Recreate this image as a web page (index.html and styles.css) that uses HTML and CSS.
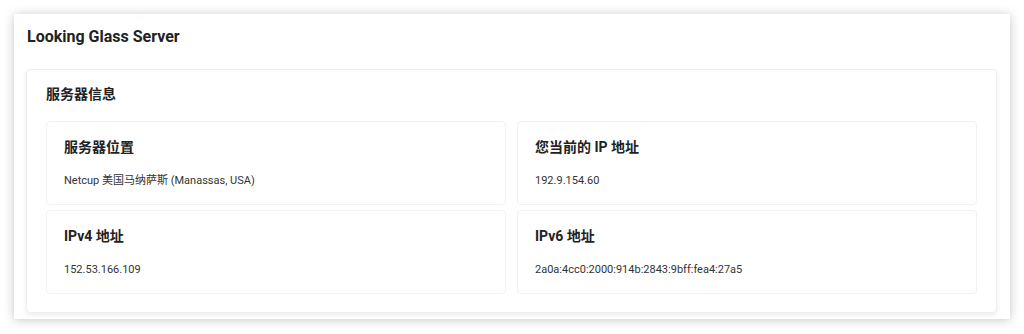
FILE: index.html
```html
<!DOCTYPE html>
<html lang="zh-CN">
<head>
  <meta charset="UTF-8">
  <meta name="viewport" content="width=device-width, initial-scale=1.0">
  <title>Looking Glass Server</title>
  <link rel="stylesheet" href="styles.css">
</head>
<body>
  <div class="window">
    <div class="header">Looking Glass Server</div>
    <div class="panel">
      <div class="panel-title">服务器信息</div>
      <div class="info-grid">
        <div class="info-card">
          <div class="info-label">服务器位置</div>
          <div class="info-value">Netcup 美国马纳萨斯 (Manassas, USA)</div>
        </div>
        <div class="info-card">
          <div class="info-label">您当前的 IP 地址</div>
          <div class="info-value">192.9.154.60</div>
        </div>
        <div class="info-card">
          <div class="info-label">IPv4 地址</div>
          <div class="info-value">152.53.166.109</div>
        </div>
        <div class="info-card">
          <div class="info-label">IPv6 地址</div>
          <div class="info-value">2a0a:4cc0:2000:914b:2843:9bff:fea4:27a5</div>
        </div>
      </div>
    </div>
  </div>
</body>
</html>
```

FILE: styles.css
```css
body {
  font-family: Roboto, "Noto Sans CJK SC", sans-serif;
  background-color: #ffffff;
  color: #222222;
  margin: 0;
  padding: 14px;
}
.window {
  width: 996px;
  height: 305px;
  box-sizing: border-box;
  background-color: #ffffff;
  padding: 12px 13px 0 12px;
  box-shadow: 0 1px 10px rgba(0, 0, 0, 0.22);
}
.header {
  font-size: 16px;
  font-weight: bold;
  line-height: 20px;
  padding-left: 1px;
  margin-top: 1px;
  margin-bottom: 22px;
}
.panel {
  background-color: #ffffff;
  border: 1px solid #efefef;
  border-radius: 4px;
  padding: 14px 19px 18px 19px;
  box-shadow: 0 2px 5px rgba(0, 0, 0, 0.08);
}
.panel-title {
  font-size: 14px;
  font-weight: bold;
  line-height: 20px;
  margin-bottom: 17px;
}
.info-grid {
  display: grid;
  grid-template-columns: 1fr 1fr;
  column-gap: 11px;
  row-gap: 5px;
}
.info-card {
  height: 84px;
  box-sizing: border-box;
  border: 1px solid #f2f2f2;
  border-radius: 4px;
  padding: 15px 17px;
}
.info-label {
  font-size: 14px;
  font-weight: bold;
  line-height: 20px;
  margin-bottom: 16px;
}
.info-value {
  font-size: 11px;
  line-height: 16px;
  color: #333333;
}
```
